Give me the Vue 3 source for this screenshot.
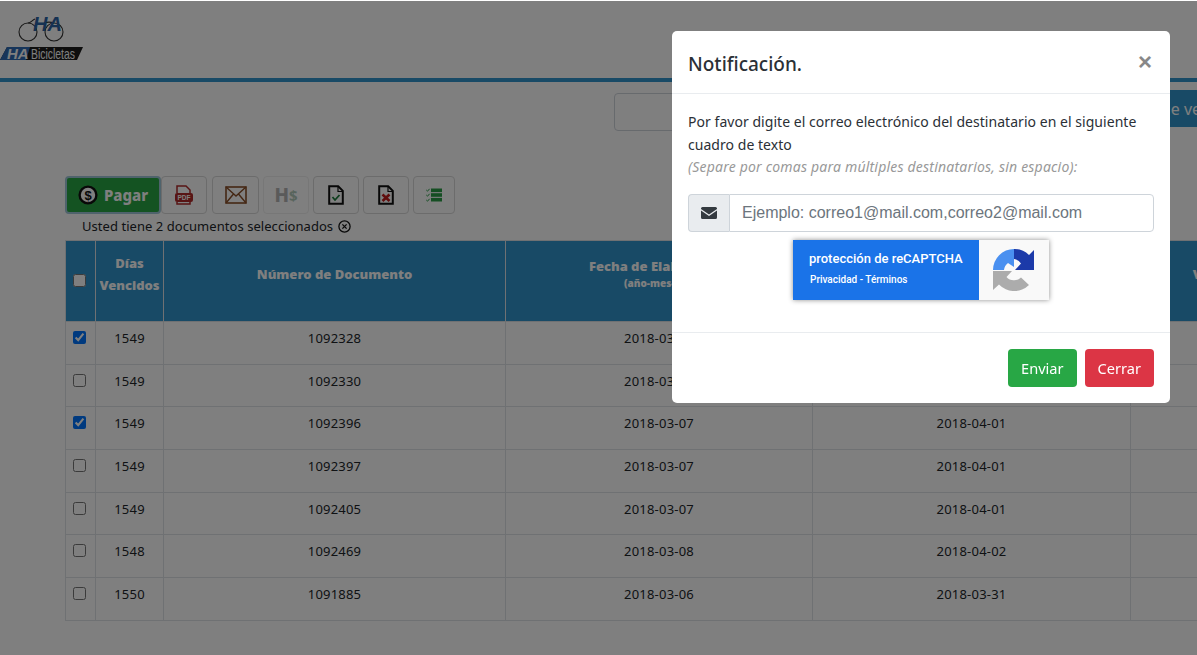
<script setup>
const rows = [
  { dias: 1549, num: '1092328', elab: '2018-03-07', venc: '2018-04-01', sel: true },
  { dias: 1549, num: '1092330', elab: '2018-03-07', venc: '2018-04-01', sel: false },
  { dias: 1549, num: '1092396', elab: '2018-03-07', venc: '2018-04-01', sel: true },
  { dias: 1549, num: '1092397', elab: '2018-03-07', venc: '2018-04-01', sel: false },
  { dias: 1549, num: '1092405', elab: '2018-03-07', venc: '2018-04-01', sel: false },
  { dias: 1548, num: '1092469', elab: '2018-03-08', venc: '2018-04-02', sel: false },
  { dias: 1550, num: '1091885', elab: '2018-03-06', venc: '2018-03-31', sel: false }
]
</script>

<template>
  <div class="page">
    <header class="top">
      <svg class="logo" width="90" height="60" viewBox="0 0 90 60">
        <circle cx="28" cy="31" r="9" fill="none" stroke="#333" stroke-width="1.1" />
        <circle cx="54" cy="31" r="9" fill="none" stroke="#333" stroke-width="1.1" />
        <path d="M28 22 C31 22 32 19 35 18 M44 22 C47 21 51 21 54 22" fill="none" stroke="#333" stroke-width="1.1" />
        <text x="33" y="30" class="logo-ha">HA</text>
        <path d="M7 46 H83 L77 59 H0 Z" fill="#1c1c1c" />
        <path d="M7 46 H30 L26 59 H0 Z" fill="#2f6bb5" />
        <text x="7" y="58" class="logo-ha2">HA</text>
        <text x="31" y="58" class="logo-name" textLength="44" lengthAdjust="spacingAndGlyphs">Bicicletas</text>
      </svg>
    </header>

    <div class="search-row">
      <input class="search" type="text" />
      <button class="search-btn">Detalle ver</button>
    </div>

    <div class="toolbar">
      <button class="tool pay">
        <svg width="20" height="20" viewBox="0 0 20 20">
          <circle cx="10" cy="10" r="8.4" fill="#fff" stroke="#111" stroke-width="2.4" />
          <text x="10" y="14.6" class="dollar">$</text>
        </svg>
        Pagar
      </button>
      <button class="tool">
        <svg width="20" height="20" viewBox="0 0 20 20">
          <path d="M3 8V1h9l4 4v3M3 17v2h13v-2" fill="none" stroke="#b02a2a" stroke-width="1.5" />
          <rect x="1" y="8" width="18" height="9" rx="2" fill="#b02a2a" />
          <text x="10" y="15.4" class="pdf">PDF</text>
        </svg>
      </button>
      <button class="tool mail">
        <svg width="22" height="18" viewBox="0 0 22 18">
          <rect x="1" y="1" width="20" height="16" fill="none" stroke="#8a4f28" stroke-width="1.6" />
          <path d="M1 1l10 9 10-9M1 17l7.5-9M21 17l-7.5-9" fill="none" stroke="#8a4f28" stroke-width="1.4" />
        </svg>
      </button>
      <button class="tool hs"><b>H</b><small>$</small></button>
      <button class="tool">
        <svg width="16" height="20" viewBox="0 0 16 20">
          <path d="M1.2 1.2h9l4.6 4.6v13H1.2z" fill="none" stroke="#111" stroke-width="2" />
          <path d="M10 1.5v5h5" fill="none" stroke="#111" stroke-width="1.2" />
          <path d="M4.5 12l2.5 3 4.5-5" fill="none" stroke="#1c7c3a" stroke-width="1.8" />
        </svg>
      </button>
      <button class="tool">
        <svg width="16" height="20" viewBox="0 0 16 20">
          <path d="M1.2 1.2h9l4.6 4.6v13H1.2z" fill="none" stroke="#111" stroke-width="2" />
          <path d="M10 1.5v5h5" fill="none" stroke="#111" stroke-width="1.2" />
          <path d="M4.5 9.5l7 6.5M11.5 9.5l-7 6.5" fill="none" stroke="#c01818" stroke-width="2.6" />
        </svg>
      </button>
      <button class="tool list">
        <svg width="16" height="14" viewBox="0 0 16 14">
          <path d="M0.3 2l1.2 1.2L3.6 0.8M0.3 7l1.2 1.2L3.6 5.8M0.3 12l1.2 1.2l2.1-2.4" fill="none" stroke="#2a9d47" stroke-width="1" />
          <rect x="5" y="0.5" width="11" height="3.6" fill="#2a9d47" />
          <rect x="5" y="5.2" width="11" height="3.6" fill="#2a9d47" />
          <rect x="5" y="9.9" width="11" height="3.6" fill="#2a9d47" />
        </svg>
      </button>
    </div>

    <p class="selected">
      Usted tiene 2 documentos seleccionados
      <svg width="13" height="13" viewBox="0 0 13 13">
        <circle cx="6.5" cy="6.5" r="5.6" fill="none" stroke="#111" stroke-width="1.3" />
        <path d="M4.4 4.4l4.2 4.2M8.6 4.4l-4.2 4.2" stroke="#111" stroke-width="1.3" />
      </svg>
    </p>

    <table class="docs">
      <thead>
        <tr>
          <th class="c-check"><input type="checkbox" /></th>
          <th class="c-dias">Días Vencidos</th>
          <th class="c-num">Número de Documento</th>
          <th class="c-date">Fecha de Elaboración<small>(año-mes-día)</small></th>
          <th class="c-venc">Fecha de Vencimiento<small>(año-mes-día)</small></th>
          <th class="c-valor">Valor</th>
        </tr>
      </thead>
      <tbody>
        <tr v-for="row in rows" :key="row.num">
          <td class="check-cell"><input type="checkbox" :checked="row.sel" /></td>
          <td>{{ row.dias }}</td>
          <td>{{ row.num }}</td>
          <td>{{ row.elab }}</td>
          <td>{{ row.venc }}</td>
          <td></td>
        </tr>
      </tbody>
    </table>
  </div>

  <div class="backdrop"></div>

  <div class="modal">
    <div class="modal-head">
      <h5>Notificación.</h5>
      <span class="close">×</span>
    </div>
    <div class="modal-body">
      <p class="lead">Por favor digite el correo electrónico del destinatario en el siguiente cuadro de texto</p>
      <p class="hint">(Separe por comas para múltiples destinatarios, sin espacio):</p>
      <div class="input-group">
        <span class="addon">
          <svg width="16" height="12" viewBox="0 0 16 12">
            <path d="M0 1.5A1.5 1.5 0 0 1 1.5 0h13A1.5 1.5 0 0 1 16 1.5v.4L8 7.4 0 1.9zM0 3.6V10.5A1.5 1.5 0 0 0 1.5 12h13a1.5 1.5 0 0 0 1.5-1.5V3.6L8 9.1z" fill="#343a40" />
          </svg>
        </span>
        <input class="mail-input" type="text" placeholder="Ejemplo: correo1@mail.com,correo2@mail.com" />
      </div>
      <div class="captcha">
        <div class="captcha-text">
          <span class="captcha-title">protección de reCAPTCHA</span>
          <span class="captcha-links">Privacidad - Términos</span>
        </div>
        <div class="captcha-logo">
          <svg width="42" height="42" viewBox="0 0 42 42">
            <path d="M0 41 V22 H19 L13.5 28 A10 10 0 0 0 28 28.5 L36 36 A21 21 0 0 1 6 35.5 Z" fill="#acacac" />
            <path d="M21 0 V18 L15 14 A10 10 0 0 0 11 21 H0 A21 21 0 0 1 21 0 Z" fill="#4a90f0" />
            <path d="M21 0 A21 21 0 0 1 36 6 L41 1 V21 H22 L28 14.5 A10 10 0 0 0 21 10 Z" fill="#1c3aa9" />
          </svg>
        </div>
      </div>
    </div>
    <div class="modal-foot">
      <button class="btn send">Enviar</button>
      <button class="btn shut">Cerrar</button>
    </div>
  </div>
</template>

<style scoped>
.page {
  width: 1197px;
  height: 655px;
  overflow: hidden;
  background: #fff;
  color: #212529;
  font-family: "Noto Sans", "Open Sans", sans-serif;
  font-size: 13px;
}
.top {
  height: 82px;
  box-sizing: border-box;
  padding-top: 1px;
  border-bottom: 4px solid #3094cc;
}
.logo {
  display: block;
}
.logo-ha {
  font: italic bold 20px "Liberation Sans", sans-serif;
  fill: #2a62a5;
}
.logo-ha2 {
  font: italic bold 15px "Liberation Sans", sans-serif;
  fill: #fff;
}
.logo-name {
  font: 15px "Liberation Sans", sans-serif;
  fill: #fff;
}
.search-row {
  display: flex;
  margin-top: 8px;
  padding-left: 614px;
  height: 40px;
}
.search {
  width: 501px;
  height: 38px;
  margin-top: 3px;
  flex: none;
  box-sizing: border-box;
  border: 1px solid #ced4da;
  border-radius: 4px;
  background: #fff;
}
.search-btn {
  height: 37px;
  flex: none;
  padding: 0 12px;
  border: 0;
  background: #3094cc;
  color: #fff;
  font: 16px "Noto Sans", sans-serif;
}
.toolbar {
  display: flex;
  gap: 4px;
  margin: 46px 0 0 65px;
  height: 38px;
}
.tool {
  width: 46px;
  height: 38px;
  padding: 0;
  flex: none;
  display: flex;
  align-items: center;
  justify-content: center;
  background: #fff;
  border: 1px solid #d8d8d8;
  border-radius: 4px;
  box-sizing: border-box;
}
.pay {
  width: 96px;
  margin-right: -4px;
  gap: 6px;
  background: #28a745;
  border: 2px solid #9ec7d8;
  color: #fff;
  font: 800 15px "Noto Sans", sans-serif;
}
.mail {
  width: 47px;
  margin-left: 1px;
}
.list {
  width: 42px;
}
.hs {
  font-family: "Noto Sans", sans-serif;
  border-color: #eee;
}
.hs b {
  font-size: 19px;
  font-weight: 800;
  color: #b4b4b4;
}
.hs small {
  font-size: 15px;
  font-weight: 700;
  color: #b0c8b8;
}
.dollar {
  font: bold 13px "Liberation Sans", sans-serif;
  fill: #111;
  text-anchor: middle;
}
.pdf {
  font: bold 6.5px "Liberation Sans", sans-serif;
  fill: #fff;
  text-anchor: middle;
}
.selected {
  display: flex;
  align-items: center;
  gap: 5px;
  margin: 3px 0 0 82px;
  height: 19px;
  font-size: 13px;
  line-height: 19px;
  letter-spacing: 0.05px;
}
.docs {
  margin: 4px 0 0 65px;
  width: 1225px;
  table-layout: fixed;
  border-collapse: collapse;
  color: #212529;
}
th {
  height: 81px;
  box-sizing: border-box;
  padding: 0 2px 14px;
  background: #3094cc;
  color: #fff;
  font-size: 13px;
  font-weight: 900;
  line-height: 22px;
  border: 1px solid #dee2e6;
  text-align: center;
  vertical-align: middle;
}
th small {
  display: block;
  margin-bottom: 4px;
  font-size: 10px;
  line-height: 12px;
}
td {
  height: 42.7px;
  box-sizing: border-box;
  padding: 6px 0 0;
  border: 1px solid #dee2e6;
  text-align: center;
  vertical-align: top;
  font-size: 13px;
  line-height: 20px;
  letter-spacing: 0.2px;
}
.c-check { width: 30px; padding: 8px 0 0; }
.c-dias { width: 68px; }
.c-num { width: 342px; }
.c-date { width: 307px; }
.c-venc { width: 318px; }
.c-valor { width: 160px; }
.check-cell {
  padding-top: 9px;
  line-height: 13px;
}
input[type="checkbox"] {
  display: inline-block;
  width: 13px;
  height: 13px;
  margin: 0 2px 0 0;
  vertical-align: top;
  accent-color: #0075ff;
}
.backdrop {
  position: fixed;
  inset: 1px 0 0 0;
  background: rgba(0, 0, 0, 0.5);
}
.modal {
  position: fixed;
  top: 31px;
  left: 672px;
  width: 498px;
  height: 372px;
  display: flex;
  flex-direction: column;
  box-sizing: border-box;
  background: #fff;
  border-radius: 5px;
  color: #2b3036;
  font-family: "Noto Sans", "Open Sans", sans-serif;
  font-size: 14px;
}
.modal-head {
  height: 63px;
  flex: none;
  display: flex;
  align-items: center;
  justify-content: space-between;
  padding: 0 18px 0 16px;
  box-sizing: border-box;
  border-bottom: 1px solid #e9ecef;
}
.modal-head h5 {
  margin: 3px 0 0;
  font-size: 19px;
  font-weight: 500;
}
.close {
  font: bold 24px "Liberation Sans", sans-serif;
  color: #888;
}
.modal-body {
  flex: 1;
  padding: 16px 16px 0;
}
.lead {
  margin: 0;
  line-height: 23px;
  letter-spacing: 0.04px;
}
.hint {
  margin: 0 0 17px;
  color: #999;
  font-style: italic;
  line-height: 21px;
  letter-spacing: 0.2px;
}
.input-group {
  display: flex;
  height: 38px;
}
.addon {
  width: 41px;
  flex: none;
  display: flex;
  align-items: center;
  justify-content: center;
  box-sizing: border-box;
  background: #e9ecef;
  border: 1px solid #ced4da;
  border-right: 0;
  border-radius: 4px 0 0 4px;
}
.mail-input {
  flex: 1;
  min-width: 0;
  box-sizing: border-box;
  padding: 0 12px;
  border: 1px solid #ced4da;
  border-radius: 0 4px 4px 0;
  font: 16px "Liberation Sans", sans-serif;
}
.mail-input::placeholder {
  color: #6c757d;
}
.captcha {
  display: flex;
  width: 256px;
  height: 60px;
  margin: 8px auto 0;
  box-shadow: 0 0 5px rgba(0, 0, 0, 0.45);
}
.captcha-text {
  flex: 1;
  display: flex;
  flex-direction: column;
  background: #1a73e8;
  color: #fff;
  font-family: Roboto, sans-serif;
  padding: 10px 0 0 16px;
}
.captcha-title {
  font-size: 13px;
  font-weight: 500;
  line-height: 18px;
}
.captcha-links {
  margin: 6px 0 0 1px;
  font-size: 10px;
  font-weight: 500;
  line-height: 12px;
}
.captcha-logo {
  width: 70px;
  display: flex;
  align-items: center;
  justify-content: center;
  background: #f9f9f9;
}
.modal-foot {
  height: 71px;
  flex: none;
  display: flex;
  align-items: center;
  justify-content: flex-end;
  gap: 8px;
  padding: 0 16px;
  box-sizing: border-box;
  border-top: 1px solid #e9ecef;
}
.btn {
  height: 38px;
  padding: 0 13px;
  border: 0;
  border-radius: 4px;
  color: #fff;
  font: 14.6px "Noto Sans", sans-serif;
}
.send {
  background: #28a745;
}
.shut {
  background: #dc3545;
}
</style>
